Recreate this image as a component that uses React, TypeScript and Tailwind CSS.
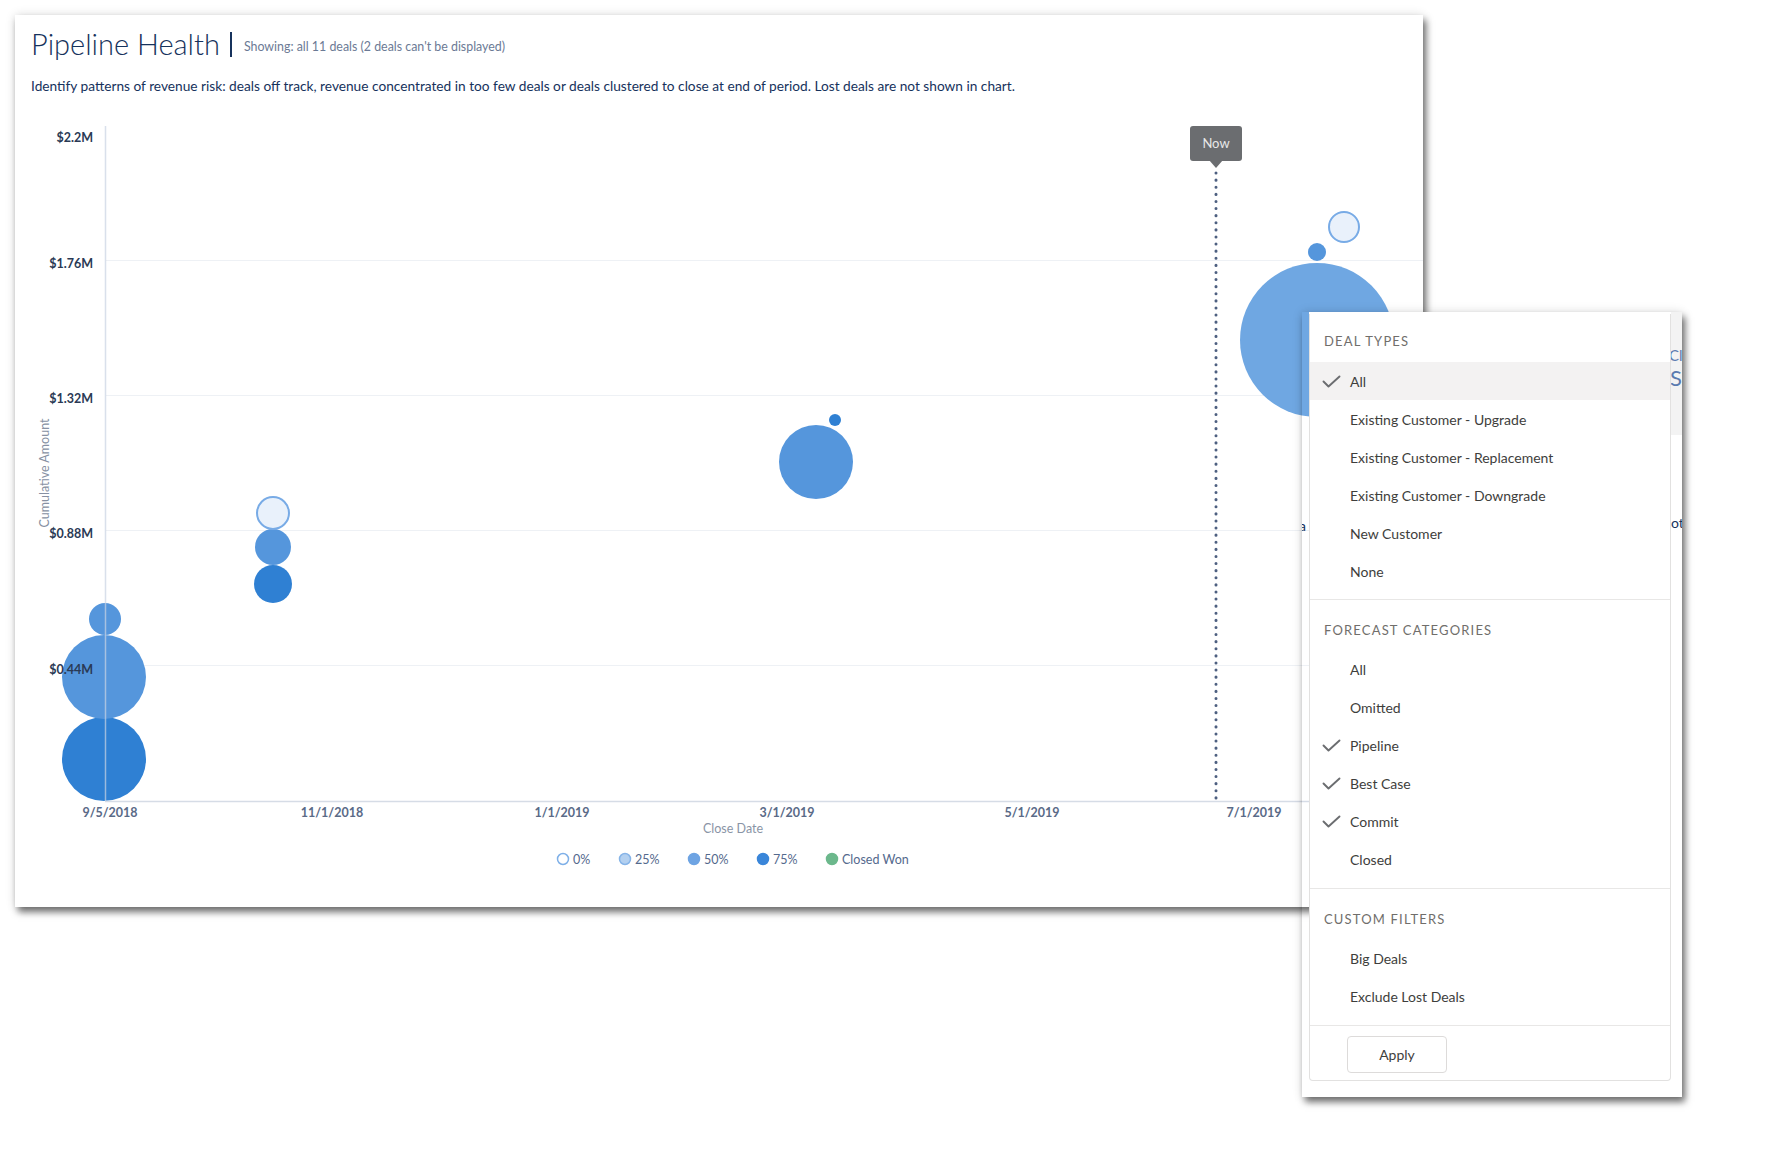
const C75 = '#2f80d3';
const C50 = '#5596dc';
const C0_FILL = '#e9f1fb';
const C0_STROKE = '#78abe6';

interface Bubble {
  x: number;
  y: number;
  r: number;
  kind: '0' | '50' | '75' | 'big';
}

const BUBBLES: Bubble[] = [
  { x: 104, y: 759, r: 42, kind: '75' },
  { x: 104, y: 677, r: 42, kind: '50' },
  { x: 105, y: 619, r: 16, kind: '50' },
  { x: 273, y: 584, r: 19, kind: '75' },
  { x: 273, y: 547, r: 18, kind: '50' },
  { x: 273, y: 513, r: 16, kind: '0' },
  { x: 816, y: 462, r: 37, kind: '50' },
  { x: 835, y: 420, r: 6, kind: '75' },
  { x: 1317, y: 340, r: 77, kind: 'big' },
  { x: 1317, y: 252, r: 9, kind: '50' },
  { x: 1344, y: 227, r: 15, kind: '0' },
];

const Y_TICKS = [
  { label: '$2.2M', y: 142 },
  { label: '$1.76M', y: 268 },
  { label: '$1.32M', y: 403 },
  { label: '$0.88M', y: 538 },
  { label: '$0.44M', y: 674 },
];

const GRID = [260, 395, 530, 665];

const X_TICKS = [
  { label: '9/5/2018', x: 110 },
  { label: '11/1/2018', x: 332 },
  { label: '1/1/2019', x: 562 },
  { label: '3/1/2019', x: 787 },
  { label: '5/1/2019', x: 1032 },
  { label: '7/1/2019', x: 1254 },
];

const LEGEND = [
  { label: '0%', x: 563, fill: '#ffffff', stroke: '#7fb0e8' },
  { label: '25%', x: 625, fill: '#b3d0f0', stroke: '#86b4e8' },
  { label: '50%', x: 694, fill: '#6ea4e3', stroke: '#6ea4e3' },
  { label: '75%', x: 763, fill: '#3a86d9', stroke: '#3a86d9' },
  { label: 'Closed Won', x: 832, fill: '#6cb88c', stroke: '#6cb88c' },
];

const SECTIONS = [
  {
    title: 'Deal Types',
    items: [
      { label: 'All', checked: true, active: true },
      { label: 'Existing Customer - Upgrade' },
      { label: 'Existing Customer - Replacement' },
      { label: 'Existing Customer - Downgrade' },
      { label: 'New Customer' },
      { label: 'None' },
    ],
  },
  {
    title: 'Forecast Categories',
    items: [
      { label: 'All' },
      { label: 'Omitted' },
      { label: 'Pipeline', checked: true },
      { label: 'Best Case', checked: true },
      { label: 'Commit', checked: true },
      { label: 'Closed' },
    ],
  },
  {
    title: 'Custom Filters',
    items: [{ label: 'Big Deals' }, { label: 'Exclude Lost Deals' }],
  },
] as { title: string; items: { label: string; checked?: boolean; active?: boolean }[] }[];

function bubbleStyle(kind: Bubble['kind']) {
  if (kind === '0') return { fill: C0_FILL, stroke: C0_STROKE, strokeWidth: 2 };
  if (kind === '75') return { fill: C75 };
  if (kind === 'big') return { fill: '#6fa7e2' };
  return { fill: C50 };
}

function Chart() {
  return (
    <svg width={1408} height={797} viewBox="15 110 1408 797" className="block" fontFamily="Lato, 'Open Sans', sans-serif">
      {GRID.map(y => (
        <line key={y} x1={106} x2={1423} y1={y + 0.5} y2={y + 0.5} stroke="#eef1f5" strokeWidth={1} />
      ))}

      <text x={0} y={0} transform="translate(49 473) rotate(-90)" textAnchor="middle" fontSize={12.5} fill="#8791a3">
        Cumulative Amount
      </text>

      {BUBBLES.map((b, i) => (
        <circle key={i} cx={b.x} cy={b.y} r={b.r} {...bubbleStyle(b.kind)} />
      ))}

      <line x1={105.5} x2={105.5} y1={126} y2={801} stroke="#c9d3e3" strokeOpacity={0.7} strokeWidth={1.5} />
      <line x1={105} x2={1423} y1={801.5} y2={801.5} stroke="#d6dce6" strokeWidth={1.5} />

      {Y_TICKS.map(t => (
        <text key={t.label} x={93} y={t.y} textAnchor="end" fontSize={12.5} fontWeight={700} fill="#2a3a55">
          {t.label}
        </text>
      ))}

      {X_TICKS.map(t => (
        <text key={t.label} x={t.x} y={817} textAnchor="middle" fontSize={12.5} fontWeight={700} fill="#5a6a87">
          {t.label}
        </text>
      ))}

      <text x={733} y={833} textAnchor="middle" fontSize={12.5} fill="#8a94a6">
        Close Date
      </text>

      {LEGEND.map(l => (
        <g key={l.label}>
          <circle cx={l.x} cy={859} r={5.5} fill={l.fill} stroke={l.stroke} strokeWidth={1.5} />
          <text x={l.x + 10} y={863.5} fontSize={12.5} fill="#54698d">
            {l.label}
          </text>
        </g>
      ))}

      {/* now marker */}
      <line x1={1216} x2={1216} y1={173} y2={800} stroke="#4d5f80" strokeWidth={3} strokeDasharray="0.1 7" strokeLinecap="round" />
      <rect x={1190} y={126} width={52} height={35} rx={3} fill="#6b6d70" />
      <path d="M1209 160 L1223 160 L1216 168 Z" fill="#6b6d70" />
      <text x={1216} y={148} textAnchor="middle" fontSize={13} fill="#e8e8e8">
        Now
      </text>
    </svg>
  );
}

function CheckMark() {
  return (
    <svg width="19" height="13" viewBox="0 0 19 13" fill="none" className="-ml-[2px]">
      <path d="M1.5 6.5 L6.5 11.5 L17.5 1.5" stroke="#6b6d70" strokeWidth={1.9} strokeLinecap="round" strokeLinejoin="round" />
    </svg>
  );
}

function FilterMenu() {
  return (
    <div className="absolute left-[1302px] top-[312px] flex h-[785px] w-[380px] shadow-[3px_5px_7px_rgba(0,0,0,0.55),0_0_10px_rgba(0,0,0,0.12)]">
      <div className="w-[7px] overflow-hidden bg-transparent">
        <div className="mt-[203px] -ml-[3px] text-[14px] text-[#16325c]">a</div>
      </div>
      <div className="flex w-[362px] flex-col">
        <div className="h-[2px] bg-white" />
        <div className="flex flex-col rounded-b-[4px] border border-t-0 border-[#e2e1e0] bg-white">
          {SECTIONS.map((s, si) => (
            <div key={s.title} className={si === 0 ? 'pb-[9px]' : 'border-t border-[#e8e7e6] pb-[10px]'}>
              <div
                className={`${si === 0 ? 'pt-[19px] pb-[13px]' : 'pt-[22px] pb-[12px]'} pl-[14px] text-[13px] leading-[16px] uppercase tracking-[0.09em] text-[#706e6b]`}
              >
                {s.title}
              </div>
              {s.items.map(it => (
                <div
                  key={it.label}
                  className={`flex h-[38px] items-center pl-[14px] text-[14px] text-[#3e3e3c] ${it.active ? 'bg-[#f3f2f2]' : ''}`}
                >
                  <span className="flex w-[26px] items-center">{it.checked && <CheckMark />}</span>
                  {it.label}
                </div>
              ))}
            </div>
          ))}
          <div className="border-t border-[#e8e7e6] pt-[10px] pb-[7px] pl-[37px]">
            <button className="h-[37px] w-[100px] rounded-[4px] border border-[#dddbda] bg-white text-[14px] text-[#3e3e3c]">
              Apply
            </button>
          </div>
        </div>
        <div className="flex-1 bg-white" />
      </div>
      <div className="flex w-[11px] flex-col overflow-hidden bg-white">
        <div className="h-[123px] overflow-hidden bg-[#f3f3f3] pt-[34px] text-[#5b7bb0]">
          <div className="-ml-[2px] text-[15px] leading-[18px]">Cl</div>
          <div className="-ml-[1px] mt-[2px] text-[22px] leading-[24px]">S</div>
        </div>
        <div className="mt-[77px] text-[14px] text-[#16325c]">ot</div>
      </div>
    </div>
  );
}

export default function App() {
  return (
    <div className="relative h-[1165px] w-[1774px] overflow-hidden bg-white font-['Lato','Open_Sans',sans-serif]">
      <div className="pl-[15px] pt-[15px]">
        <div className="h-[892px] w-[1408px] bg-white shadow-[3px_5px_7px_rgba(0,0,0,0.55),0_0_10px_rgba(0,0,0,0.12)]">
          <div className="h-[95px] px-[16px] pt-[11px]">
            <div className="flex items-center">
              <h1 className="text-[29px] leading-[36px] font-light text-[#16325c]">Pipeline Health</h1>
              <span className="ml-[10px] h-[25px] w-[2px] bg-[#16325c]" />
              <span className="ml-[12px] mt-[6px] text-[12.4px] text-[#6b7a95]">Showing: all 11 deals (2 deals can't be displayed)</span>
            </div>
            <p className="mt-[14px] text-[13.7px] text-[#16325c]">
              Identify patterns of revenue risk: deals off track, revenue concentrated in too few deals or deals clustered to close at end of period. Lost deals are not shown in chart.
            </p>
          </div>
          <Chart />
        </div>
      </div>
      <FilterMenu />
    </div>
  );
}
